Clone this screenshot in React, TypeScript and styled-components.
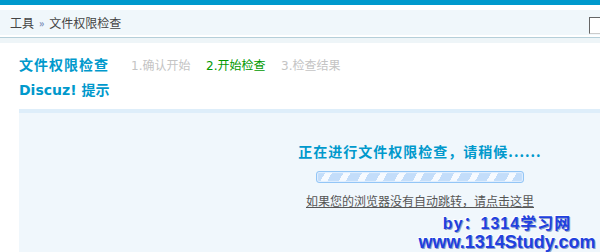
import styled, { createGlobalStyle } from "styled-components";

const GlobalStyle = createGlobalStyle`
    html, body {
        margin: 0;
        padding: 0;
        overflow: hidden;
        background: #fff;
    }
    body {
        font-family: "DejaVu Sans", "Noto Sans CJK SC", sans-serif;
        font-size: 12px;
        color: #333;
    }
`;

const Page = styled.div`
    position: relative;
    width: 600px;
    height: 252px;
    overflow: hidden;
    border-top: 5px solid #0099cc;
`;
const Header = styled.div`
    margin-top: 5px;
    height: 25px;
    background: #f0f7fb;
    display: flex;
    align-items: center;
    justify-content: space-between;
    padding-left: 10px;
`;
const Crumbs = styled.div`
    display: flex;
    align-items: center;
    gap: 5px;
    color: #444;
    font-family: "Noto Sans CJK SC", sans-serif;
    font-size: 12px;
`;
const Sep = styled.span`
    color: #7a8fb8;
    font-size: 10px;
    font-weight: bold;
`;
const SearchBox = styled.div`
    width: 30px;
    height: 15px;
    margin-top: 7px;
    margin-right: -21px;
    align-self: flex-start;
    border: 1px solid #ccc;
    border-top-color: #666;
    border-left-color: #666;
    background: #fff;
`;
const HeaderRule = styled.div`
    margin-top: 2px;
    height: 5px;
    border-top: 1px solid #b5cfd9;
    background: #eef5f8;
`;
const Main = styled.div`
    padding: 8px 0 0 19px;
`;
const TitleRow = styled.div`
    height: 26px;
    display: flex;
    align-items: center;
`;
const Title = styled.h3`
    margin: 0 22px 0 0;
    font-family: "Noto Sans CJK SC", sans-serif;
    font-size: 14px;
    letter-spacing: 1px;
    color: #0099cc;
`;
const Step = styled.span<{ active?: boolean }>`
    margin-right: 17px;
    width: 58px;
    white-space: nowrap;
    color: ${(p) => (p.active ? "#009900" : "#c4c4c4")};
`;
const SubTitle = styled.h3`
    margin: 0 0 8px;
    height: 24px;
    display: flex;
    align-items: center;
    font-size: 14px;
    color: #0099cc;
    font-family: "DejaVu Sans", "Noto Sans CJK SC", sans-serif;
`;
const Box = styled.div`
    width: 802px;
    height: 135px;
    border-top: 4px solid #deeefa;
    border-bottom: 4px solid #deeefa;
    background: #f0f7fc;
    display: flex;
    flex-direction: column;
    align-items: center;
    padding-top: 28px;
    box-sizing: content-box;
`;
const Message = styled.div`
    height: 20px;
    line-height: 20px;
    font-family: "Noto Sans CJK SC", sans-serif;
    font-size: 14px;
    font-weight: bold;
    letter-spacing: 1px;
    color: #0099cc;
`;
const Progress = styled.div`
    margin-top: 10px;
    width: 206px;
    height: 10px;
    border: 1px solid #93c6f6;
    border-radius: 3px;
    background: repeating-linear-gradient(
        -60deg,
        #c3ddfa 0px,
        #c3ddfa 10px,
        #f6faff 10px,
        #f6faff 16px
    );
    box-shadow: inset 0 0 1px 1px #e2efff;
`;
const Link = styled.a`
    margin-top: 8px;
    line-height: 20px;
    font-family: "Noto Sans CJK SC", sans-serif;
    font-size: 12px;
    color: #555;
    text-decoration: underline;
`;
const Watermark = styled.div`
    position: absolute;
    left: 407px;
    top: 210px;
    width: 200px;
    display: flex;
    flex-direction: column;
    align-items: center;
    font-family: "Liberation Sans", "Noto Sans CJK SC", sans-serif;
    font-weight: bold;
    color: #2040e0;
    text-shadow: 1px 1px 0 #8fa0c8, -1px -1px 0 #fff;
`;
const MarkLine = styled.div<{ size: number; shift?: number }>`
    font-size: ${(p) => p.size}px;
    line-height: 18px;
    white-space: nowrap;
    letter-spacing: ${(p) => p.shift ?? 0}px;
`;

export default function App() {
    return (
        <>
            <GlobalStyle />
            <Page>
                <Header>
                    <Crumbs>
                        <span>工具</span>
                        <Sep>»</Sep>
                        <span>文件权限检查</span>
                    </Crumbs>
                    <SearchBox />
                </Header>
                <HeaderRule />
                <Main>
                    <TitleRow>
                        <Title>文件权限检查</Title>
                        <Step>1.确认开始</Step>
                        <Step active>2.开始检查</Step>
                        <Step>3.检查结果</Step>
                    </TitleRow>
                    <SubTitle>Discuz! 提示</SubTitle>
                    <Box>
                        <Message>正在进行文件权限检查，请稍候......</Message>
                        <Progress />
                        <Link href="#">如果您的浏览器没有自动跳转，请点击这里</Link>
                    </Box>
                </Main>
                <Watermark>
                    <MarkLine size={16} shift={1}>by：1314学习网</MarkLine>
                    <MarkLine size={18}>www.1314Study.com</MarkLine>
                </Watermark>
            </Page>
        </>
    );
}
